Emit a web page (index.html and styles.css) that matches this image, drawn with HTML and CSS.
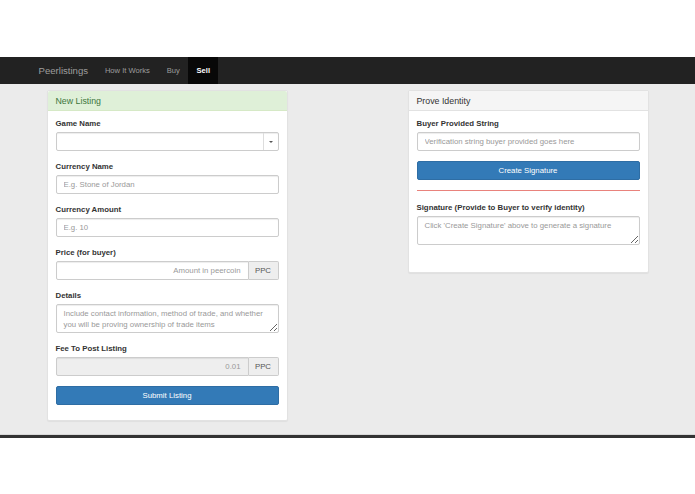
FILE: index.html
```html
<!DOCTYPE html>
<html lang="en">
<head>
    <meta charset="UTF-8">
    <meta name="viewport" content="width=device-width, initial-scale=1.0">
    <title>Peerlistings - Sell</title>
    <link rel="stylesheet" href="styles.css">
</head>
<body>
    <div class="top_space"></div>

    <nav class="navbar">
        <div class="container nav_inner">
            <a class="brand" href="#">Peerlistings</a>
            <a class="nav_link" href="#">How It Works</a>
            <a class="nav_link" href="#">Buy</a>
            <a class="nav_link active" href="#">Sell</a>
        </div>
    </nav>

    <div class="main">
        <div class="container columns">

            <div class="panel panel_success">
                <div class="panel_heading">New Listing</div>
                <div class="panel_body">
                    <div class="form_group">
                        <label for="game">Game Name</label>
                        <div class="combo">
                            <input type="text" id="game" class="form_control">
                            <span class="combo_toggle"><span class="caret"></span></span>
                        </div>
                    </div>

                    <div class="form_group">
                        <label for="currency">Currency Name</label>
                        <input type="text" id="currency" class="form_control" placeholder="E.g. Stone of Jordan">
                    </div>

                    <div class="form_group">
                        <label for="amount">Currency Amount</label>
                        <input type="text" id="amount" class="form_control" placeholder="E.g. 10">
                    </div>

                    <div class="form_group">
                        <label for="price">Price (for buyer)</label>
                        <div class="input_group">
                            <input type="text" id="price" class="form_control right" placeholder="Amount in peercoin">
                            <span class="addon">PPC</span>
                        </div>
                    </div>

                    <div class="form_group">
                        <label for="details">Details</label>
                        <textarea id="details" class="form_control" placeholder="Include contact information, method of trade, and whether you will be proving ownership of trade items"></textarea>
                    </div>

                    <div class="form_group">
                        <label for="fee">Fee To Post Listing</label>
                        <div class="input_group">
                            <input type="text" id="fee" class="form_control right" value="0.01" disabled>
                            <span class="addon">PPC</span>
                        </div>
                    </div>

                    <button class="btn submit">Submit Listing</button>
                </div>
            </div>

            <div class="panel panel_default">
                <div class="panel_heading">Prove Identity</div>
                <div class="panel_body prove">
                    <div class="form_group">
                        <label for="buyer_string">Buyer Provided String</label>
                        <input type="text" id="buyer_string" class="form_control" placeholder="Verification string buyer provided goes here">
                    </div>

                    <button class="btn">Create Signature</button>

                    <hr class="divider">

                    <div class="form_group">
                        <label for="signature">Signature (Provide to Buyer to verify identity)</label>
                        <textarea id="signature" class="form_control" placeholder="Click 'Create Signature' above to generate a signature"></textarea>
                    </div>
                </div>
            </div>

        </div>
    </div>

    <div class="footer_line"></div>
</body>
</html>
```

FILE: styles.css
```css
* {
    box-sizing: border-box;
}

body {
    margin: 0;
    background: #fff;
    font-family: "Liberation Sans", Arial, sans-serif;
    font-size: 7.8px;
    color: #333;
}

.top_space {
    height: 57px;
}

.container {
    width: 602px;
    margin: 0 auto;
}

/* navbar */

.navbar {
    height: 27px;
    background: #222;
}

.nav_inner {
    display: flex;
    height: 27px;
}

.navbar a {
    display: flex;
    align-items: center;
    padding: 0 8.4px;
    text-decoration: none;
    color: #9d9d9d;
}

.brand {
    margin-left: -16.4px;
    font-size: 9.6px;
}

.nav_link {
    font-size: 7.6px;
}

.nav_link.active {
    background: #080808;
    color: #fff;
    font-weight: bold;
}

/* main area */

.main {
    background: #ebebeb;
    height: 351px;
    padding-top: 6px;
    border-bottom: 1px solid #d8d8d8;
}

.columns {
    display: flex;
    justify-content: space-between;
    align-items: flex-start;
}

.footer_line {
    height: 3px;
    background: #333;
}

.panel {
    width: 241px;
    background: #fff;
    border: 1px solid #e2e2e2;
    border-radius: 2px;
    box-shadow: 0 1px 1px rgba(0, 0, 0, 0.05);
}

.panel_heading {
    height: 20px;
    padding: 0 8px;
    display: flex;
    align-items: center;
    font-size: 8.8px;
    border-bottom: 1px solid #e2e2e2;
    border-radius: 2px 2px 0 0;
}

.panel_success .panel_heading {
    background: #dff0d8;
    color: #3c763d;
    border-color: #d6e9c6;
}

.panel_default .panel_heading {
    background: #f5f5f5;
    color: #333;
}

.panel_body {
    padding: 7px 8px 15px;
}

.panel_body.prove {
    padding-bottom: 17px;
}

/* forms */

.form_group {
    margin-bottom: 10px;
}

label {
    display: block;
    height: 11px;
    line-height: 11px;
    margin-bottom: 3px;
    font-weight: bold;
}

.form_control {
    display: block;
    width: 100%;
    height: 19px;
    padding: 0 7px;
    font-family: inherit;
    font-size: 7.8px;
    color: #555;
    background: #fff;
    border: 1px solid #ccc;
    border-radius: 2px;
    box-shadow: inset 0 1px 1px rgba(0, 0, 0, 0.075);
    outline: none;
}

.form_control::placeholder {
    color: #999;
}

textarea.form_control {
    height: 29px;
    padding: 3px 7px;
    line-height: 11px;
    resize: vertical;
}

.form_control.right {
    text-align: right;
}

.form_control:disabled {
    background: #eee;
    color: #999;
}

.input_group {
    display: flex;
}

.input_group .form_control {
    border-radius: 2px 0 0 2px;
}

.addon {
    width: 30px;
    flex-shrink: 0;
    display: flex;
    align-items: center;
    justify-content: center;
    background: #eee;
    color: #555;
    border: 1px solid #ccc;
    border-left: 0;
    border-radius: 0 2px 2px 0;
}

.combo {
    display: flex;
    height: 19px;
    border: 1px solid #ccc;
    border-radius: 2px;
    box-shadow: inset 0 1px 1px rgba(0, 0, 0, 0.075);
}

.combo .form_control {
    height: 17px;
    border: 0;
    box-shadow: none;
    background: transparent;
}

.combo_toggle {
    width: 15px;
    flex-shrink: 0;
    display: flex;
    align-items: center;
    justify-content: center;
    border-left: 1px solid #ddd;
}

.caret {
    width: 0;
    height: 0;
    border-top: 2.5px solid #555;
    border-left: 2px solid transparent;
    border-right: 2px solid transparent;
}

.btn {
    display: block;
    width: 100%;
    height: 19px;
    font-family: inherit;
    font-size: 7.8px;
    color: #fff;
    background: #337ab7;
    border: 1px solid #2e6da4;
    border-radius: 2px;
}

.divider {
    margin: 10px 0 11px;
    border: 0;
    border-top: 1px solid #e9827c;
}
```
